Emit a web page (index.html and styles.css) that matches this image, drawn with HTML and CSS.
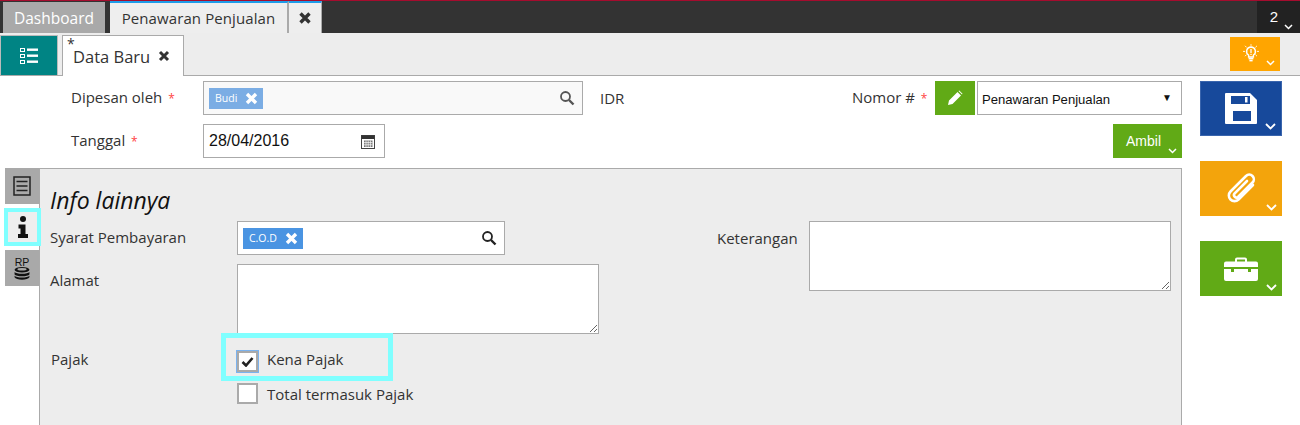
FILE: index.html
```html
<!DOCTYPE html>
<html lang="id">
<head>
<meta charset="utf-8">
<title>Penawaran Penjualan</title>
<link rel="stylesheet" href="styles.css">
</head>
<body>
<header class="topbar">
  <div class="toptab dash">Dashboard</div>
  <div class="toptab active">Penawaran Penjualan</div>
  <div class="toptab closer"><svg width="14" height="14" viewBox="0 0 14 14"><path d="M2.500 2.500l9 9M11.500 2.500l-9 9" stroke="#333" stroke-width="3.400"/></svg></div>
  <div class="count"><span>2</span><svg class="chev" width="9" height="6" viewBox="0 0 9 6"><path d="M1 1l3.500 3.500L8 1" fill="none" stroke="#fff" stroke-width="1.500"/></svg></div>
</header>
<div class="subbar">
  <div class="listbtn"><svg width="20" height="18" viewBox="0 0 20 18" fill="#fff"><path d="M1 1h5v4H1zM2 2v2h3V2zM1 7h5v4H1zM2 8v2h3V8zM1 13h5v4H1zM2 14v2h3v-2z" fill-rule="evenodd"/><rect x="8" y="1.500" width="11" height="2.400"/><rect x="8" y="7.500" width="11" height="2.400"/><rect x="8" y="13.500" width="11" height="2.400"/></svg></div>
  <div class="doctab"><sup class="star">*</sup><span>Data Baru</span><svg width="12" height="12" viewBox="0 0 12 12"><path d="M2 2l8 8M10 2l-8 8" stroke="#333" stroke-width="3"/></svg></div>
  <div class="lampbtn">
    <svg width="16" height="18" viewBox="0 0 20 22"><g stroke="#fff" stroke-width="1.100" fill="none"><path d="M10 0v2M0 9h2.500M17.500 9H20M2.500 2l2 2M17.500 2l-2 2M2.500 15l2-2M17.500 15l-2-2"/><path d="M10 3.500a5.500 5.500 0 0 1 3 10.100V16h-6v-2.400A5.500 5.500 0 0 1 10 3.500z" stroke-width="1.800"/></g><rect x="7" y="17" width="6" height="2" fill="#fff"/><rect x="8" y="19.500" width="4" height="2" fill="#fff"/><rect x="9.200" y="6" width="1.600" height="5" fill="#fff"/><rect x="9.200" y="12" width="1.600" height="1.600" fill="#fff"/></svg>
    <svg class="chev" width="9" height="6" viewBox="0 0 9 6"><path d="M1 1l3.500 3.500L8 1" fill="none" stroke="#fff" stroke-width="1.500"/></svg>
  </div>
</div>
<div class="content">
  <main class="main">
    <div class="formrow first">
      <label class="flabel">Dipesan oleh <i>*</i></label>
      <div class="field wide"><span class="chip light">Budi <svg width="13" height="13" viewBox="0 0 13 13"><path d="M2 2l9 9M11 2l-9 9" stroke="#fff" stroke-width="3.400"/></svg></span>
        <svg class="search" width="16" height="16" viewBox="0 0 16 16" fill="none" stroke="#555"><circle cx="6.500" cy="6.500" r="4.500" stroke-width="1.800"/><path d="M10 10l4.500 4.500" stroke-width="2.400"/></svg></div>
      <span class="idr">IDR</span>
      <label class="nolabel">Nomor # <i>*</i></label>
      <div class="penbtn"><svg width="16" height="16" viewBox="0 0 16 16" fill="#fff"><path d="M1 15l1-4.500L10.500 2l3.500 3.500L5.500 14zM11.500 1l.8-.5 3.200 3.200-.5.800z"/></svg></div>
      <div class="select"><span>Penawaran Penjualan</span><b>▼</b></div>
    </div>
    <div class="formrow second">
      <label class="flabel">Tanggal <i>*</i></label>
      <div class="field date"><span>28/04/2016</span><svg width="14" height="15" viewBox="0 0 14 15"><rect x=".5" y="1.500" width="13" height="13" fill="#fff" stroke="#444"/><rect x=".5" y="1.500" width="13" height="3.500" fill="#333"/><path d="M3 6.500h8.500v6.500H3z" fill="#777"/><path d="M5 6.500v6.500M7.200 6.500v6.500M9.400 6.500v6.500M3 8.600h8.500M3 10.800h8.500" stroke="#fff" stroke-width=".7"/></svg></div>
      <div class="ambil">Ambil<svg class="chev" width="9" height="6" viewBox="0 0 9 6"><path d="M1 1l3.500 3.500L8 1" fill="none" stroke="#fff" stroke-width="1.500"/></svg></div>
    </div>
    <div class="workspace">
      <nav class="sidetabs">
        <div class="stab"><svg width="18" height="20" viewBox="0 0 18 20" fill="none" stroke="#222" stroke-width="1.500"><rect x="1" y="1" width="16" height="18"/><path d="M3.500 5.500h11M3.500 10h11M3.500 14.500h11"/></svg></div>
        <div class="stab current"><svg width="10" height="22" viewBox="0 0 10 22" fill="#111"><circle cx="5" cy="3" r="3"/><path d="M.5 8.500h7V18H10v4H0v-4h2.500v-5.500h-2z"/></svg></div>
        <div class="stab coins"><span>RP</span><svg width="18" height="13" viewBox="0 0 18 14" fill="#111"><ellipse cx="9" cy="3" rx="8" ry="3"/><ellipse cx="9" cy="2.500" rx="5" ry="1.300" fill="#a9a9a9"/><path d="M1 5.500c1.500 2.500 14.500 2.500 16 0v2.500c-1.500 2.500-14.500 2.500-16 0zM1 9.500c1.500 2.500 14.500 2.500 16 0V11c-1.500 3.500-14.500 3.500-16 0z"/></svg></div>
      </nav>
      <section class="panel">
        <h2>Info lainnya</h2>
        <div class="cols">
          <div class="col-left">
            <div class="prow syarat">
              <label>Syarat Pembayaran</label>
              <div class="field cod"><span class="chip solid">C.O.D <svg width="13" height="13" viewBox="0 0 13 13"><path d="M2 2l9 9M11 2l-9 9" stroke="#fff" stroke-width="3.400"/></svg></span>
                <svg class="search" width="16" height="16" viewBox="0 0 16 16" fill="none" stroke="#222"><circle cx="6.500" cy="6.500" r="4.500" stroke-width="1.800"/><path d="M10 10l4.500 4.500" stroke-width="2.400"/></svg></div>
            </div>
            <div class="prow alamat">
              <label>Alamat</label>
              <textarea class="area addr"></textarea>
            </div>
            <div class="prow pajak">
              <label>Pajak</label>
              <div class="checks">
                <div class="check marked"><span class="box on"><svg width="13" height="11" viewBox="0 0 13 11"><path d="M1.500 6l3.500 3.500L11.500 2" fill="none" stroke="#222" stroke-width="2.600"/></svg></span><span class="ctext">Kena Pajak</span></div>
                <div class="check plain"><span class="box"></span><span>Total termasuk Pajak</span></div>
              </div>
            </div>
          </div>
          <div class="col-right">
            <label>Keterangan</label>
            <textarea class="area note"></textarea>
          </div>
        </div>
      </section>
    </div>
  </main>
  <aside class="actions">
    <div class="act blue"><svg width="32" height="31" viewBox="0 0 32 31"><path fill="#fff" d="M1 0h24l7 7v23a1 1 0 0 1-1 1H1a1 1 0 0 1-1-1V1a1 1 0 0 1 1-1z"/><path fill="#17499b" d="M6 3h19v8H6zM8 18h18v10H8z"/><rect x="20" y="4" width="2.500" height="5.500" fill="#fff"/></svg><svg class="chev" width="11" height="7" viewBox="0 0 11 7"><path d="M1 1l4.500 4.500L10 1" fill="none" stroke="#fff" stroke-width="1.800"/></svg></div>
    <div class="act amber"><svg width="30" height="32" viewBox="0 0 30 32" fill="none" stroke="#fff" stroke-width="2.600" stroke-linecap="round"><path d="M27 12L12.500 26.500a5.500 5.500 0 0 1-8-8L20 3a4.500 4.500 0 0 1 6.500 6.500L12 24a2.500 2.500 0 0 1-3.500-3.500L21 8"/></svg><svg class="chev" width="11" height="7" viewBox="0 0 11 7"><path d="M1 1l4.500 4.500L10 1" fill="none" stroke="#fff" stroke-width="1.800"/></svg></div>
    <div class="act green"><svg width="34" height="24" viewBox="0 0 34 24" fill="#fff"><path fill-rule="evenodd" d="M11 5V2.500A2 2 0 0 1 13 .5h8a2 2 0 0 1 2 2V5h-2V2.500h-8V5z"/><path d="M2 4.500h30a2 2 0 0 1 2 2V10H0V6.500a2 2 0 0 1 2-2zM0 12h7v3h3v-3h14v3h3v-3h7v10a2 2 0 0 1-2 2H2a2 2 0 0 1-2-2z"/></svg><svg class="chev" width="11" height="7" viewBox="0 0 11 7"><path d="M1 1l4.500 4.500L10 1" fill="none" stroke="#fff" stroke-width="1.800"/></svg></div>
  </aside>
</div>
</body>
</html>
```
FILE: styles.css
```css
* { box-sizing: border-box; }
html, body { margin: 0; padding: 0; height: 425px; overflow: hidden; background: #fff; }
body { font-family: "Open Sans", "Noto Sans", sans-serif; font-size: 15px; color: #222; }
i { color: #f44; font-style: normal; font-size: 12px; margin-left: 2px; }

.topbar { display: flex; height: 33px; background: #333; border-top: 1px solid #a50c2e; align-items: stretch; }
.toptab { display: flex; align-items: center; font-size: 15.500px; }
.dash { width: 102px; margin: 1px 0 0 3px; background: #a9a9a9; color: #fff; justify-content: center; padding-top: 1px; }
.active { width: 179px; margin-left: 5px; background: #eee; color: #333; justify-content: center; border-top: 2px solid #1e9be8; border-right: 2px solid #aaa; font-size: 15px; letter-spacing: .1px; }
.closer { width: 33px; background: #eee; border-top: 2px solid #1e9be8; border-right: 1px solid #aaa; justify-content: center; }
.count { margin-left: auto; width: 43px; background: #222; color: #fff; position: relative; display: flex; justify-content: center; align-items: center; padding-right: 9px; }
.count span { font-family: "Liberation Sans", sans-serif; font-size: 15px; margin-top: -2px; }
.chev { position: absolute; right: 5px; bottom: 5px; }
.count .chev { right: 7px; bottom: 3px; }

.subbar { height: 43px; background: #ededed; border-bottom: 1px solid #aaa; display: flex; align-items: flex-end; }
.listbtn { width: 58px; height: 40px; background: #008484; border: 1px solid #bbb; border-bottom: 0; display: flex; align-items: center; justify-content: center; }
.doctab { width: 122px; height: 41px; margin: 0 0 -1px 4px; background: #fff; border: 1px solid #aaa; border-bottom: 0; display: flex; align-items: center; padding-left: 10px; gap: 8px; font-size: 16.500px; position: relative; color: #333; }
.star { position: absolute; left: 4px; top: 0; font-size: 14px; line-height: 16px; margin: 0; }
.lampbtn { margin: 0 20px 4px auto; width: 50px; height: 34px; background: #ffa500; position: relative; display: flex; align-items: center; justify-content: center; padding: 0 8px 3px 0; }

.content { display: flex; }
.main { width: 1182px; }
.formrow { display: flex; height: 34px; position: relative; }
.formrow.first { margin-top: 5px; }
.formrow.second { margin-top: 9px; }
.flabel { width: 132px; margin-left: 71px; line-height: 33px; font-size: 15px; color: #333; }
.field { border: 1px solid #aaa; background: #fff; display: flex; align-items: center; padding: 0 5px; position: relative; }
.wide { width: 380px; height: 34px; background: #f9f9f9; }
.search { margin-left: auto; margin-right: 2px; }
.chip { display: inline-flex; align-items: center; color: #fff; height: 21px; }
.chip.light { background: #7bade4; width: 54px; font-size: 10.500px; padding-left: 6px; gap: 8px; }
.chip.solid { background: #4a94e2; width: 60px; font-size: 10.500px; padding-left: 6px; gap: 8px; }
.idr { margin-left: 17px; line-height: 34px; font-size: 15px; width: 252px; color: #333; }
.nolabel { width: 83px; line-height: 33px; font-size: 15px; color: #333; }
.penbtn { width: 40px; height: 34px; background: #61aa16; display: flex; align-items: center; justify-content: center; }
.select { width: 205px; margin-left: 2px; border: 1px solid #aaa; display: flex; align-items: center; justify-content: space-between; padding: 2px 9px 0 4px; font-family: "Liberation Sans", sans-serif; font-size: 13.100px; color: #111; }
.select b { font-size: 10px; font-weight: normal; margin-top: -3px; }
.date { width: 182px; height: 34px; justify-content: space-between; padding: 0 9px 0 5px; font-family: "Liberation Sans", sans-serif; font-size: 16px; color: #111; }
.ambil { margin-left: auto; width: 69px; background: #61aa16; color: #fff; position: relative; font-family: "Liberation Sans", sans-serif; font-size: 14px; line-height: 34px; padding-left: 13px; }
.ambil .chev { right: 5px; bottom: 4px; }

.workspace { display: flex; margin-top: 10px; height: 257px; padding-left: 5px; }
.sidetabs { width: 34px; display: flex; flex-direction: column; gap: 4px; }
.stab { width: 34px; height: 36px; background: #a9a9a9; display: flex; align-items: center; justify-content: center; position: relative; }
.stab.current { background: #eee; border: 4px solid #80ffff; height: 38px; width: 37px; margin-left: -1px; flex: none; z-index: 1; }
.coins { flex-direction: column; padding-top: 1px; }
.coins span { font-size: 10.500px; line-height: 10px; color: #111; font-family: "Liberation Sans", sans-serif; }

.panel { width: 1143px; background: #ededed; border: 1px solid #aaa; border-bottom: 0; padding-left: 10px; }
.panel h2 { margin: 15px 0 0; font-size: 23px; line-height: 33px; font-style: italic; font-weight: 400; color: #111; height: 37px; }
.cols { display: flex; }
.col-left { width: 667px; }
.prow { display: flex; }
.prow label { width: 187px; font-size: 15px; color: #333; }
.syarat { height: 34px; }
.syarat label { line-height: 33px; }
.cod { width: 268px; height: 34px; padding: 0 5px 0 5px; }
.alamat { margin-top: 9px; }
.alamat label { line-height: 32px; }
.area { display: block; background: #fff; border: 1px solid #aaa; border-radius: 0; margin: 0; font: inherit; }
.addr { width: 362px; height: 70px; }
.pajak { position: relative; }
.pajak label { margin-left: 1px; width: 186px; padding-top: 15px; line-height: 20px; }
.checks { display: flex; flex-direction: column; }
.check { display: flex; align-items: center; gap: 9px; font-size: 15px; color: #333; }
.box { width: 21px; height: 21px; background: #fff; border: 2px solid #aaa; display: flex; align-items: center; justify-content: center; flex: none; }
.box.on { outline: 1px solid #7bb2ee; }
.marked { height: 48px; width: 172px; margin: -1px 0 0 -16px; border: 5px solid #80ffff; padding: 8px 0 0 11px; }
.ctext { margin-top: -5px; }
.plain { margin-top: 2px; height: 21px; }
.col-right { display: flex; width: 454px; }
.col-right label { width: 92px; line-height: 34px; margin-left: 0; font-size: 15px; color: #333; }
.note { width: 362px; height: 70px; }

.actions { margin-left: 18px; padding-top: 5px; display: flex; flex-direction: column; gap: 25px; }
.act { width: 82px; height: 55px; position: relative; display: flex; align-items: center; justify-content: center; }
.blue { background: #17499b; border: 1px solid #3a65ad; }
.amber { background: #f3a40c; }
.green { background: #61aa16; }
```
